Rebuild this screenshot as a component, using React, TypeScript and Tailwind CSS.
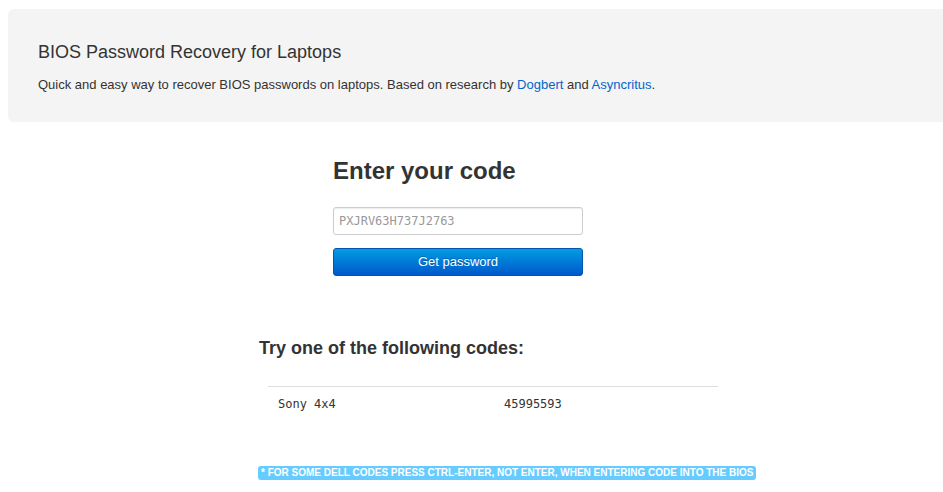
import React from 'react';

const codes = [{ name: 'Sony 4x4', code: '45995593' }];

export default function App() {
  return (
    <div className="min-h-[492px] overflow-hidden bg-white text-[#333] font-['Liberation_Sans',Arial,sans-serif]">
      <div className="pl-2 pt-[9px]">
        <div className="mr-[-12px] h-[113px] rounded-md bg-[#f4f4f4] pl-[30px] pt-[32px]">
          <h1 className="text-[18px] leading-[22px] text-[#333]">BIOS Password Recovery for Laptops</h1>
          <p className="mt-[13px] text-[13px] leading-[18px] text-[#333]">
            Quick and easy way to recover BIOS passwords on laptops. Based on research by{' '}
            <a href="#" className="text-[#0066cc]">Dogbert</a> and{' '}
            <a href="#" className="text-[#0066cc]">Asyncritus</a>.
          </p>
        </div>
      </div>

      <div className="ml-[333px] mt-[34px] w-[250px]">
        <h2 className="text-[24px] font-bold leading-[30px] text-[#333]">Enter your code</h2>
        <input
          type="text"
          placeholder="PXJRV63H737J2763"
          className="mt-[21px] block h-[28px] w-[250px] rounded-[3px] border border-[#cccccc] bg-white px-[5px] font-['DejaVu_Sans_Mono',monospace] text-[12px] text-[#555] placeholder:text-[#999] shadow-[inset_0_1px_1px_rgba(0,0,0,0.075)] outline-none"
        />
        <button className="mt-[13px] block h-[28px] w-[250px] rounded-[3px] border border-[#0055b3] bg-gradient-to-b from-[#0a9be0] to-[#0058cc] text-[13px] text-white [text-shadow:0_-1px_0_rgba(0,0,0,0.25)]">
          Get password
        </button>
      </div>

      <div className="ml-[259px] mt-[61px] w-[500px]">
        <h3 className="text-[18px] font-bold leading-[22px] text-[#333]">Try one of the following codes:</h3>
        <table className="ml-[9px] mt-[27px] w-[450px] border-t border-[#dddddd] font-['DejaVu_Sans_Mono',monospace] text-[12px] text-[#333]">
          <tbody>
            {codes.map(c => (
              <tr key={c.name}>
                <td className="w-[236px] pl-[10px] pt-[8px] pb-2 leading-[18px]">{c.name}</td>
                <td className="pt-[8px] pb-2 leading-[18px]">{c.code}</td>
              </tr>
            ))}
          </tbody>
        </table>
        <div className="-ml-px mt-[38px]">
          <span className="inline-block whitespace-nowrap rounded-[3px] bg-[#66ccff] px-[3px] text-[10px] font-bold leading-[14px] text-white">
            * FOR SOME DELL CODES PRESS CTRL-ENTER, NOT ENTER, WHEN ENTERING CODE INTO THE BIOS
          </span>
        </div>
      </div>
    </div>
  );
}
